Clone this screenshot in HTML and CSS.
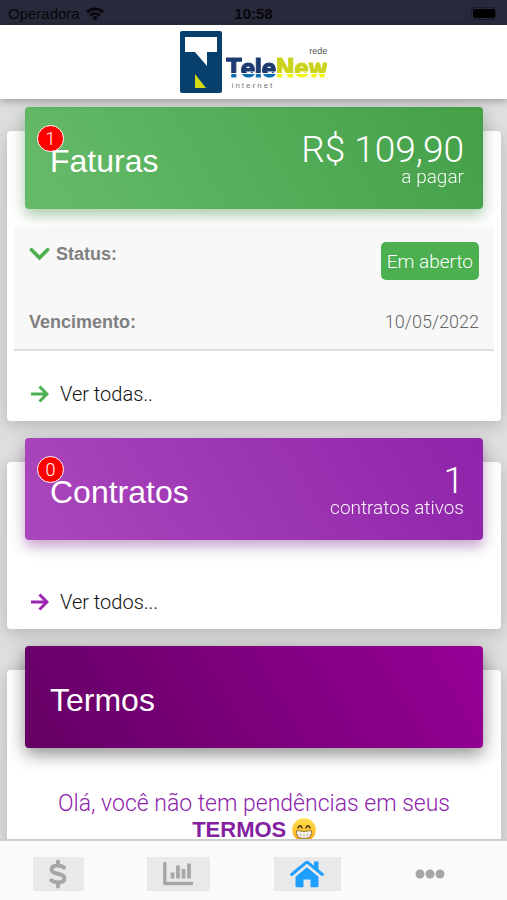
FILE: index.html
```html
<!DOCTYPE html>
<html lang="pt-BR">
<head>
  <meta charset="utf-8">
  <meta name="viewport" content="width=device-width, initial-scale=1">
  <title>TeleNew</title>
  <link rel="stylesheet" href="styles.css">
</head>
<body>
  <div class="app">
    <div class="status-bar">
      <span class="carrier">Operadora
        <svg class="wifi" viewBox="0 0 18 14" aria-hidden="true"><g fill="none" stroke="currentColor" stroke-width="2.6"><path d="M1 5.2C5.5.8 12.500.8 17 5.200"/><path d="M4 8.600C6.800 5.800 11.200 5.800 14 8.600"/></g><path d="M9 13.500 6.100 10.500Q9 8 11.900 10.500Z" fill="currentColor"/></svg>
      </span>
      <span class="clock">10:58</span>
      <span class="battery-slot"><svg class="battery" viewBox="0 0 28 14" aria-hidden="true"><rect x=".5" y=".5" width="24" height="12" rx="3.500" fill="none" stroke="#1b1c29"/><rect x="2" y="2" width="22" height="9" rx="2"/><path d="M26 4.500q2 2 0 4z" fill="#1b1c29"/></svg></span>
    </div>

    <header class="brand">
      <svg class="brand-mark" viewBox="0 0 42 62" aria-hidden="true">
        <rect width="42" height="62" rx="2" fill="#07406c"/>
        <path d="M5 6H37V21H27V35L15 21H5Z" fill="#fff"/>
        <path d="M15 43V57H26Z" fill="#d4db13"/>
      </svg>
      <div class="brand-words">
        <span class="brand-top">rede</span>
        <span class="brand-name"><span class="tele">Tele</span><span class="new">New</span></span>
        <span class="brand-sub">internet</span>
      </div>
    </header>

    <main class="content">
      <section class="card">
        <div class="hero hero-green">
          <h2 class="hero-title">Faturas<span class="badge">1</span></h2>
          <div class="hero-data"><span class="amount">R$ 109,90</span><span class="caption">a pagar</span></div>
        </div>
        <div class="panel">
          <div class="row">
            <span class="label"><svg class="chevron" viewBox="0 0 22 14" aria-hidden="true"><path d="M2.500 2.500 11 11l8.500-8.500" fill="none" stroke="#4caf50" stroke-width="3.800" stroke-linecap="round"/></svg>Status:</span>
            <button class="pill" type="button">Em aberto</button>
          </div>
          <div class="row row-due">
            <span class="label">Vencimento:</span>
            <span class="date">10/05/2022</span>
          </div>
        </div>
        <a class="more green" href="#faturas"><svg viewBox="0 0 18 18" aria-hidden="true"><path d="M0 9H15.500M8.500 1.500 16 9l-7.500 7.500" fill="none" stroke="currentColor" stroke-width="3"/></svg><span>Ver todas..</span></a>
      </section>

      <section class="card">
        <div class="hero hero-purple">
          <h2 class="hero-title">Contratos<span class="badge">0</span></h2>
          <div class="hero-data"><span class="amount">1</span><span class="caption">contratos ativos</span></div>
        </div>
        <a class="more purple" href="#contratos"><svg viewBox="0 0 18 18" aria-hidden="true"><path d="M0 9H15.500M8.500 1.500 16 9l-7.500 7.500" fill="none" stroke="currentColor" stroke-width="3"/></svg><span>Ver todos...</span></a>
      </section>

      <section class="card">
        <div class="hero hero-dark">
          <h2 class="hero-title">Termos</h2>
        </div>
        <p class="notice">Olá, você não tem pendências em seus <strong>TERMOS</strong>
          <svg class="grin" viewBox="0 0 24 24" role="img" aria-label="Sorriso">
            <defs><linearGradient id="face" x1="0" y1="0" x2="0" y2="1"><stop offset="0" stop-color="#ffe04a"/><stop offset=".6" stop-color="#fbc22f"/><stop offset="1" stop-color="#e89418"/></linearGradient></defs>
            <circle cx="12" cy="12" r="11.800" fill="url(#face)"/>
            <path d="M6 9.800q2-4 4 0M14 9.800q2-4 4 0" fill="none" stroke="#5a3a12" stroke-width="1.600" stroke-linecap="round"/>
            <path d="M4.500 12.500q7.500 2 15 0q.8 8-7.500 8t-7.500-8z" fill="#fff" stroke="#8b6a38" stroke-width=".9"/>
            <path d="M5 16.500q7 1.500 14 0M8.500 13.300v6M12 13.500v7M15.500 13.300v6" fill="none" stroke="#b9b0a0" stroke-width=".6"/>
          </svg>
        </p>
      </section>
    </main>

    <nav class="tabs">
      <a class="tab" href="#pagamentos" aria-label="Pagamentos"><span class="tab-box tab-pay"><svg viewBox="0 0 18 30" aria-hidden="true"><path d="M15 8.500Q12.500 6.500 9 6.500C5 6.500 2.600 8 2.600 10.700C2.600 16 15.400 13.500 15.400 19.300C15.400 22 13 23.500 9 23.500Q5 23.500 2.300 21.300M9 2.500V6.500M9 23.500V27.500" fill="none" stroke="currentColor" stroke-width="4" stroke-linecap="round"/></svg></span></a>
      <a class="tab" href="#consumo" aria-label="Consumo"><span class="tab-box tab-chart"><svg viewBox="0 0 30 24" aria-hidden="true"><path d="M1.800 1.500V21.500H28.500" fill="none" stroke="currentColor" stroke-width="3.400" stroke-linecap="round" stroke-linejoin="round"/><path d="M9.500 10.500V16.500M15 3.500V16.500M20.500 7V16.500M26 1.500V16.500" fill="none" stroke="currentColor" stroke-width="3.800"/></svg></span></a>
      <a class="tab tab-active" href="#inicio" aria-label="Início"><span class="tab-box tab-home"><svg viewBox="0 0 34 28" aria-hidden="true"><path d="M1.700 14.500 16 2.700q1-.7 2 0L32.300 14.500" fill="none" stroke="currentColor" stroke-width="3" stroke-linecap="round"/><path d="M24 1.500h4.500V11L24 7.300Z M17 7.300 28.500 16.800V26q0 1.200-1.200 1.200H20.500V19.500H13.500V27.200H6.700q-1.200 0-1.200-1.200V16.800Z" fill="currentColor"/></svg></span></a>
      <a class="tab tab-more" href="#mais" aria-label="Mais"><svg class="dots" viewBox="0 0 30 10" aria-hidden="true"><g fill="currentColor"><circle cx="5" cy="5" r="4.500"/><circle cx="15" cy="5" r="4.500"/><circle cx="25" cy="5" r="4.500"/></g></svg></a>
    </nav>
  </div>
</body>
</html>
```
FILE: styles.css
```css
* { box-sizing: border-box; }

body {
  margin: 0;
  font-family: "Liberation Sans", Arial, sans-serif;
  font-size: 18px;
  line-height: 24px;
  color: #2b2b2b;
}

a { color: inherit; text-decoration: none; }
svg { display: block; flex: none; }

.app {
  display: flex;
  flex-direction: column;
  height: 100vh;
  overflow: hidden;
  background: #dedede;
}

/* Status bar */
.status-bar {
  display: grid;
  grid-template-columns: 1fr auto 1fr;
  align-items: center;
  flex: none;
  height: 25px;
  padding: 2px 8px 0;
  background: #28293a;
  color: #07070c;
  font-size: 14px;
}
.carrier { display: flex; align-items: center; gap: 6px; font-size: 15px; }
.wifi { width: 18px; height: 14px; }
.clock { font-size: 15px; font-weight: 700; }
.battery-slot { justify-self: end; }
.battery { width: 28px; height: 14px; }

/* Brand header */
.brand {
  position: relative;
  z-index: 2;
  display: flex;
  justify-content: center;
  align-items: center;
  gap: 4px;
  flex: none;
  height: 74px;
  background: #fff;
  box-shadow: 0 2px 8px rgba(0, 0, 0, .3);
}
.brand-mark { width: 42px; height: 62px; }
.brand-words {
  display: flex;
  flex-direction: column;
  padding-top: 14px;
}
.brand-name {
  font-family: Roboto, "Liberation Sans", sans-serif;
  font-size: 26px;
  line-height: 26px;
  font-weight: 800;
}
.tele, .new {
  -webkit-background-clip: text;
  background-clip: text;
  color: transparent;
  -webkit-text-stroke: 1px transparent;
}
.tele { background-image: linear-gradient(#1c3a70 66%, #fff 66% 69%, #0a6fb0 69%); }
.new { background-image: linear-gradient(#cbd31d 66%, #fff 66% 69%, #f0f51a 69%); }
.brand-top {
  align-self: flex-end;
  font-size: 9px;
  line-height: 8px;
  color: #555;
}
.brand-sub {
  padding-left: 6px;
  font-size: 8px;
  line-height: 10px;
  letter-spacing: 2px;
  color: #777;
}

/* Cards */
.content {
  display: flex;
  flex-direction: column;
  gap: 41px;
  flex: 1;
  min-height: 0;
  overflow: hidden;
  padding: 32px 6px 0 7px;
}
.card {
  flex: none;
  padding: 0 7px;
  border-radius: 4px;
  background: #fff;
  box-shadow: 0 4px 16px rgba(0, 0, 0, .18);
}
.hero {
  position: relative;
  display: flex;
  justify-content: space-between;
  height: 102px;
  margin: -24px 11px 0;
  padding: 26px 19px 0 25px;
  border-radius: 4px;
  color: #fff;
}
.hero-green {
  background: linear-gradient(60deg, #66bb6a, #43a047);
  box-shadow: 0 4px 20px rgba(0, 0, 0, .14), 0 7px 12px rgba(76, 175, 80, .3);
}
.hero-purple {
  background: linear-gradient(60deg, #ab47bc, #8e24aa);
  box-shadow: 0 4px 20px rgba(0, 0, 0, .14), 0 7px 12px rgba(156, 39, 176, .3);
}
.hero-dark {
  background: linear-gradient(60deg, #640064, #960096);
  box-shadow: 0 6px 18px rgba(0, 0, 0, .45);
}
.hero-title {
  position: relative;
  margin: 10px 0 0;
  font-size: 32px;
  line-height: 36px;
  font-weight: 400;
}
.badge {
  position: absolute;
  top: -18px;
  left: -13px;
  width: 27px;
  height: 27px;
  border: 1px solid #fff;
  border-radius: 50%;
  background: #f00;
  font-family: Roboto, "Liberation Sans", sans-serif;
  font-size: 18px;
  line-height: 26px;
  font-weight: 300;
  text-align: center;
}
.hero-data {
  display: flex;
  flex-direction: column;
  align-items: flex-end;
  font-family: Roboto, "Liberation Sans", sans-serif;
  font-weight: 300;
}
.amount { font-size: 37px; line-height: 34px; }
.caption { font-size: 19px; line-height: 20px; opacity: .95; }

.panel {
  margin-top: 18px;
  padding: 15px 15px 15px;
  border-bottom: 2px solid #dedede;
  background: #f8f8f8;
}
.row { display: flex; justify-content: space-between; }
.row-due { margin-top: 30px; }
.label { display: flex; align-items: center; align-self: flex-start; gap: 6px; color: #808080; font-weight: 700; }
.chevron { width: 21px; height: 14px; }
.pill {
  height: 38px;
  padding: 0 6px;
  border: 0;
  border-radius: 5px;
  background: #4caf50;
  color: #fff;
  font-family: Roboto, "Liberation Sans", sans-serif;
  font-size: 19px;
  font-weight: 300;
}
.date {
  font-family: Roboto, "Liberation Sans", sans-serif;
  font-weight: 300;
  color: #666;
}

.more {
  display: flex;
  align-items: center;
  gap: 11px;
  padding: 31px 17px 15px;
  font-family: Roboto, "Liberation Sans", sans-serif;
  font-size: 20px;
  font-weight: 300;
}
.hero + .more { padding-top: 50px; }
.more svg { width: 18px; height: 18px; }
.more span { color: #111; }
.green { color: #4caf50; }
.purple { color: #9c27b0; }

.notice {
  margin: 43px 0 0;
  padding: 0 30px 20px;
  font-family: Roboto, "Liberation Sans", sans-serif;
  font-size: 23px;
  font-weight: 300;
  line-height: 26px;
  text-align: center;
  color: #8e24aa;
}
.notice strong {
  font-family: "Liberation Sans", Arial, sans-serif;
  font-size: 22px;
  font-weight: 700;
  color: #8321a0;
}
.grin { display: inline-block; width: 24px; height: 24px; vertical-align: -5px; }

/* Tab bar */
.tabs {
  position: relative;
  z-index: 2;
  display: grid;
  grid-template-columns: 116px 124px 134px 1fr;
  flex: none;
  height: 61px;
  border-top: 2px solid #cdcdcd;
  background: #fafafa;
  color: #a6a6a6;
}
.tab { display: flex; justify-content: center; align-items: center; padding-top: 6px; }
.tab-more { padding-right: 22px; }
.tab-box {
  display: flex;
  justify-content: center;
  align-items: center;
  height: 34px;
  background: #e9e9e9;
}
.tab-pay { width: 51px; }
.tab-pay svg { width: 18px; height: 30px; }
.tab-chart { width: 63px; }
.tab-chart svg { width: 30px; height: 24px; }
.tab-home { width: 67px; }
.tab-home svg { width: 34px; height: 28px; }
.tab-active { color: #1e9fff; }
.dots { width: 30px; height: 10px; }
```
